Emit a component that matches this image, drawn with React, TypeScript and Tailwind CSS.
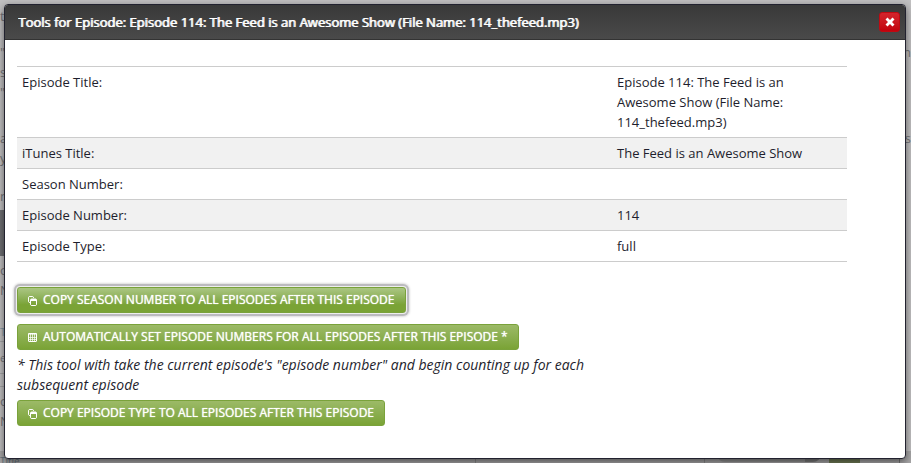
import React, { useState } from 'react';

const TITLE = 'Episode 114: The Feed is an Awesome Show (File Name: 114_thefeed.mp3)';

const details = [
  { label: 'Episode Title:', value: TITLE },
  { label: 'iTunes Title:', value: 'The Feed is an Awesome Show' },
  { label: 'Season Number:', value: '' },
  { label: 'Episode Number:', value: '114' },
  { label: 'Episode Type:', value: 'full' },
];

function CopyIcon() {
  return (
    <svg viewBox="0 0 9 10" className="w-[9px] h-[10px] mt-[2px] shrink-0" fill="none" aria-hidden="true">
      <path d="M2 6.500H1.200L.5 5.800V1.200L1.200.5h3.600l.7.7V2" stroke="white" />
      <path d="M3.200 3h4.600l.7.7v5.100l-.7.7H3.200l-.7-.7V3.700z" stroke="white" />
      <path d="M3 3h5.500v2H3z" fill="white" />
    </svg>
  );
}

function TableIcon() {
  return (
    <svg viewBox="0 0 9 9" className="w-[9px] h-[9px] mt-px shrink-0" fill="none" stroke="white" aria-hidden="true">
      <rect x=".5" y=".5" width="8" height="8" rx=".5" />
      <path d="M0 1h9" />
      <path d="M2.500 1v8M4.500 1v8M6.500 1v8M0 4.500h9M0 6.500h9" strokeWidth=".7" />
    </svg>
  );
}

function ToolButton({ icon, focused, children }: { icon: React.ReactNode; focused?: boolean; children: React.ReactNode }) {
  return (
    <button
      type="button"
      className={`h-[26px] w-fit px-[10px] flex items-center gap-[6px] rounded-[3px] border border-[#7aa23b] text-xs text-white [text-shadow:0_0_1px_white] whitespace-nowrap cursor-pointer ${
        focused
          ? 'bg-linear-to-b from-[#abc683] to-[#7aa335] to-70% outline-none shadow-[0_0_0_1px_#eeeeee,0_0_0_3px_#bcbbbf,0_0_2px_4px_#dddddd]'
          : 'bg-linear-to-b from-[#9cba67] to-[#7aa335]'
      }`}
    >
      {icon}
      <span>{children}</span>
    </button>
  );
}

// Dimmed episode list under the dialog
function PageBehind() {
  return (
    <div className="absolute inset-0 overflow-hidden bg-[#c2c1c2] text-[13px] leading-5 text-[#77777b]" aria-hidden="true">
      <div className="flex flex-col h-full">
        <div className="h-[42px] pt-[6px]">t</div>
        <div className="h-5 flex justify-between"><span>"</span><span>th</span></div>
        <div className="h-5">s</div>
        <div className="h-[46px]">"</div>
        <div className="h-5 flex justify-between"><span>a</span><span>us</span></div>
        <div className="h-[38px]">y</div>
        <div className="h-6">n</div>
        <div className="h-[46px] w-10 bg-[#6f7074]" />
        <div className="h-5 mt-1">o</div>
        <div className="h-[42px]">N</div>
        <div className="h-5 w-10 border-b border-[#a5a5a7] text-[11px] text-[#7f95a5]">Ti</div>
        <div className="h-8 w-10 pt-[6px] border-b border-[#a5a5a7] text-[11px]">e</div>
        <div className="h-[13px] w-10 border-b border-[#a5a5a7]" />
        <div className="h-5 mt-1">o</div>
        <div className="h-10">N</div>
        <div className="grow flex items-end justify-between bg-[#a9a8a9]">
          <span className="text-[10px] leading-[4px] text-[#65747f]">Title</span>
          <div className="flex h-3 mr-[11px] pr-[39px] border-r border-[#777777]">
            <div className="w-[230px] border-x border-[#8c8c8c]" />
            <div className="w-[88px] ml-3 mb-px rounded-bl-lg bg-[#969696]" />
            <div className="w-4 mb-px bg-[#7d7d7d] rounded-br-lg" />
            <div className="w-[31px] ml-2 bg-[#727e57]" />
          </div>
        </div>
      </div>
    </div>
  );
}

export default function App() {
  const [open, setOpen] = useState(true);

  return (
    <div className="relative min-h-screen overflow-hidden font-['Open_Sans','Noto_Sans',sans-serif] text-[13px] leading-5 text-[#1e1e2d]">
      <PageBehind />
      {open && (
        <div
          role="dialog"
          aria-labelledby="dialog-title"
          className="relative mt-1 ml-1 mr-[5px] mb-1 bg-white border border-[#22222f] rounded-[4px] shadow-[0_3px_8px_rgba(0,0,0,0.55)]"
        >
          {/* Header */}
          <div className="h-[35px] pl-[13px] pr-[5px] flex items-center justify-between rounded-t-[3px] border-b border-[#333333] bg-linear-to-b from-[#393939] to-[#4a4a4a]">
            <h1 id="dialog-title" className="pr-1 text-[13px] font-normal text-white [text-shadow:1px_0_0_white] truncate">
              Tools for Episode: {TITLE}
            </h1>
            <button
              type="button"
              aria-label="Close"
              onClick={() => setOpen(false)}
              className="w-[21px] h-5 shrink-0 flex items-center justify-center rounded-[3px] border border-[#bf0a12] bg-linear-to-b from-[#d3242c] to-[#c3000b] cursor-pointer"
            >
              <svg viewBox="0 0 10 10" className="w-[10px] h-[10px]" fill="white">
                <path d="M2.500.5 5 3 7.500.5 9.500 2.500 7 5l2.500 2.500-2 2L5 7 2.500 9.500l-2-2L3 5 .5 2.500z" />
              </svg>
            </button>
          </div>

          {/* Details */}
          <div className="pt-[26px] pb-8 pl-3 pr-[58px]">
            <table className="w-full border-collapse border-t border-[#cccccc]">
              <tbody>
                {details.map(row => (
                  <tr key={row.label} className="border-b border-[#cccccc] even:bg-[#f1f1f1]">
                    <th scope="row" className="h-[31px] px-[5px] py-[5px] text-left align-top font-normal">{row.label}</th>
                    <td className="w-[235px] px-[5px] py-[5px] align-top">{row.value}</td>
                  </tr>
                ))}
              </tbody>
            </table>

            {/* Tools */}
            <div className="mt-[25px] flex flex-col">
              <ToolButton icon={<CopyIcon />} focused>COPY SEASON NUMBER TO ALL EPISODES AFTER THIS EPISODE</ToolButton>
              <div className="mt-[11px]">
                <ToolButton icon={<TableIcon />}>AUTOMATICALLY SET EPISODE NUMBERS FOR ALL EPISODES AFTER THIS EPISODE *</ToolButton>
              </div>
              <p className="my-[5px] max-w-[600px] text-sm leading-5 italic">
                * This tool with take the current episode's "episode number" and begin counting up for each subsequent episode
              </p>
              <ToolButton icon={<CopyIcon />}>COPY EPISODE TYPE TO ALL EPISODES AFTER THIS EPISODE</ToolButton>
            </div>
          </div>
        </div>
      )}
    </div>
  );
}
